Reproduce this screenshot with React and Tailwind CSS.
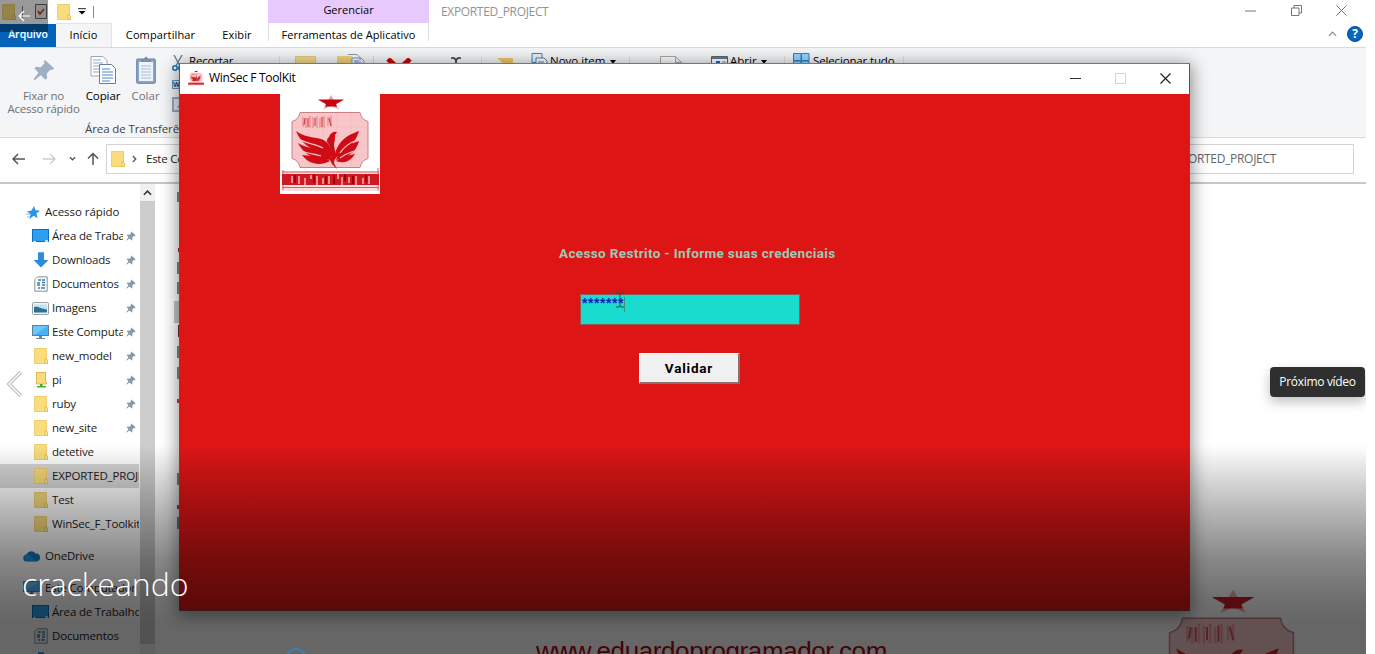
import React from "react";

const Folder = ({ className = "" }) => (
  <svg viewBox="0 0 14 16" className={"shrink-0 " + className}>
    <path d="M.5.5h12v11l1 1v3H.5z" fill="#f9dc7c" stroke="#e9c65c" strokeWidth=".8" />
    <path d="M11 10.5l2.5 1.5v3.5H11z" fill="#fbe79a" stroke="#e0b94e" strokeWidth=".8" />
  </svg>
);

const PinIcon = ({ className = "" }) => (
  <svg viewBox="0 0 24 24" className={"shrink-0 " + className} fill="currentColor">
    <path d="M13 1l10 9-2 2-2-.3-4 4 .5 5-2 2-5-5L2 23l-1.500-1L6 15l-4.500-5 2-1.500 5 .5 4-4.500-.5-2z" />
  </svg>
);

const Monitor = ({ stand }) => (
  <svg viewBox="0 0 17 16" className="h-4 w-[17px] shrink-0">
    <rect x=".5" y="1.500" width="16" height={stand ? 10 : 12} fill="#2d9ff0" stroke={stand ? "#5c7f96" : "#0d6dc4"} />
    {stand ? (
      <>
        <path d="M1 2h15v9H1z" fill="#46b1f5" />
        <path d="M1 2h15L3 10.500H1z" fill="#6cc6f8" />
        <path d="M7 12h3v2H7zM4 14h9v1H4z" fill="#6e8594" />
      </>
    ) : (
      <path d="M1 13h3v1H1zM13 12h3v2h-3z" fill="#bfe1fa" />
    )}
  </svg>
);

const DocIcon = () => (
  <svg viewBox="0 0 14 16" className="h-4 w-[14px] shrink-0">
    <path d="M.8 3.500L3.500.8h9.700v14.400H.8z" fill="#fafafa" stroke="#8b9299" />
    <path d="M4 4h3M8 4h3M3 7h3M8 6.500h3M3 9h3M8 9h3M4 12h2M7 12h4" stroke="#3a7fae" strokeWidth="1.400" />
  </svg>
);

const DownIcon = () => (
  <svg viewBox="0 0 16 16" className="h-4 w-4 shrink-0">
    <path d="M5 .5h6V8h4.500L8 15.500.5 8H5z" fill="#2d8ade" />
    <path d="M5 .5h6" stroke="#6aa9dc" />
  </svg>
);

const ImageIcon = () => (
  <svg viewBox="0 0 17 13" className="h-[13px] w-[17px] shrink-0">
    <rect x=".5" y=".5" width="16" height="12" rx="1" fill="#f4f4f4" stroke="#9b9fa3" />
    <rect x="2" y="2.500" width="13" height="8" fill="#bfe2f7" />
    <path d="M2 5c4-1 7 2 13 2.500v3H2z" fill="#2f6f8f" />
  </svg>
);

const Cloud = () => (
  <svg viewBox="0 0 17 12" className="h-3 w-[17px] shrink-0">
    <path d="M4 11.500a3.500 3.500 0 0 1-.4-7A5 5 0 0 1 12.500 3.500 4 4 0 0 1 13.500 11.500z" fill="#1177c8" />
    <path d="M3.600 4.500c3 0 6 3 10 6.800H4a3.500 3.500 0 0 1-.4-6.800" fill="#1f93e0" />
  </svg>
);

const NetFolder = () => (
  <svg viewBox="0 0 14 16" className="h-4 w-[14px] shrink-0">
    <path d="M2.500.5h9v9l1 .5v2h-10z" fill="#f9dc7c" stroke="#dfb84c" />
    <path d="M6 12h2.500v2H12v1.500H3V14h3z" fill="#3faf3a" />
  </svg>
);

const StarIcon = () => (
  <svg viewBox="0 0 14 13" className="h-[13px] w-[14px] shrink-0">
    <path d="M8 0l1.500 4.200 4.500.3-3.500 3 1 4.700-3.800-2.400L3.500 13l1-5L1 5.500l4.500-1z" fill="#2c93e3" />
    <path d="M0 8h4M1 11h3" stroke="#7fbdec" />
  </svg>
);

const Emblem = ({ className = "", flat = false }) => (
  <svg viewBox="0 0 100 100" className={className}>
    {!flat && <rect width="100" height="100" fill="#fff" />}
    <path d="M51 1l3 5h10l-8 4.500 3 5-8-3.500-8 3.500 3-5-8-4.500h10z" fill="#eba8a8" />
    <path d="M38 5.500h26L56 10l1 2.500H45L46 10z" fill="#c5040c" />
    <path d="M20 18.500h60q1 7 8 9v37q-7 2-8 9H20q-1-7-8-9v-37q7-2 8-9z" fill="#f8c6c8" stroke="#bd777a" strokeWidth=".9" />
    <path d="M15 33h70M15 42h70M15 51h70M15 60h70M29 20v53M43 20v53M57 20v53M71 20v53" stroke="#f3b5b8" strokeWidth=".5" />
    <path d="M23 23v10M26 24v10M30 22v12M33 23v11M37 22v12M40 24v10M44 22v12M48 23v9M51 22v10" stroke="#ea9599" strokeWidth="1.600" />
    <path d="M25 24l-1 7M28 24v9M35 24v8M42 23v10M49 24l2 8" stroke="#cc3a42" strokeWidth="1.100" fill="none" />
    <g fill="#cf0c15">
      <path d="M16 37c8 6 17 6 25 8 6 2 9 6 10 12v9c-4-4-6-6-11-8-9-3-19-8-24-21z" />
      <path d="M18 49c8 5 17 5 24 8 5 2 7 5 8 9-4-1-8-1-12-2-9-1-16-7-20-15z" />
      <path d="M22 61c7 1 14 1 20 2 4 1 6 3 8 4-6 3-11 4-17 2-4-1-8-4-11-8z" />
      <path d="M79 37c-8 3-13 5-18 11-4 5-6 9-7 18 4-5 9-7 13-11 6-5 9-9 12-18z" />
      <path d="M79 47c-6 2-11 4-15 8-4 3-7 7-8 11 5-1 9-2 13-5 5-3 8-7 10-14z" />
      <path d="M75 60c-7 1-13 3-19 7 7 3 14 1 19-7z" />
      <path d="M57 38c-3-1-7 1-8 5-2 1-2 3-2 5 3 3 4 9 4 14l4 4c2-6-1-11-1-16 1-3 1-6 1-9z" />
      <path d="M48 62l7 1-1 6 3 6-5-5z" />
    </g>
    <path d="M19 45c8 5 17 5 24 9M22 57c7 3 13 3 19 5M77 46c-8 3-13 7-17 13M74 57c-6 2-10 4-14 7" stroke="#f8c6c8" strokeWidth="1.200" fill="none" />
    <rect x="1.500" y="77" width="98" height="20" fill="#fbdddd" />
    <path d="M2 78h97M2 93.500h97M3 76v20M98 74v22" stroke="#d66068" strokeWidth="1" />
    <rect x="2" y="80" width="97" height="11" fill="#ce1822" />
    <path d="M12 82v7M19 82v8M25 84v7M31 81v4M37 82v9M43 84v6M49 82v8M58 80v5M62 83v8M69 83v6M76 82v9M83 84v6M89 82v8" stroke="#f0989d" strokeWidth="1.800" />
    <path d="M15 81v8M34 80v9M46 82v8M54 81v9M65 80v7M73 82v8M86 81v7" stroke="#a3000a" strokeWidth="2" />
  </svg>
);

const pins = [
  [<Monitor />, "Área de Traba", true],
  [<DownIcon />, "Downloads", true],
  [<DocIcon />, "Documentos", true],
  [<ImageIcon />, "Imagens", true],
  [<Monitor stand />, "Este Computador", true],
  [<Folder className="h-4 w-[14px]" />, "new_model", true],
  [<NetFolder />, "pi", true],
  [<Folder className="h-4 w-[14px]" />, "ruby", true],
  [<Folder className="h-4 w-[14px]" />, "new_site", true],
  [<Folder className="h-4 w-[14px]" />, "detetive", false],
  [<Folder className="h-4 w-[14px]" />, "EXPORTED_PROJECT", false, true],
  [<Folder className="h-4 w-[14px]" />, "Test", false],
  [<Folder className="h-4 w-[14px]" />, "WinSec_F_Toolkit", false],
];

function SideRow({ icon, label, pinned, selected }) {
  return (
    <div className={"flex h-6 w-[139px] shrink-0 items-center pl-8 " + (selected ? "bg-[#d6d6d6]" : "")}>
      <span className="flex w-[17px] shrink-0 justify-center">{icon}</span>
      <span className={"ml-[3px] shrink-0 overflow-hidden whitespace-nowrap " + (pinned ? "w-[71px]" : "w-[87px]")}>{label}</span>
      {pinned && <PinIcon className="ml-[3px] h-[10px] w-[10px] text-[#8b98a4]" />}
    </div>
  );
}

function Sidebar() {
  return (
    <div className="flex h-[470px] w-[155px] shrink-0 tracking-[-0.18px]">
      <div className="flex w-[140px] flex-col overflow-hidden pt-4">
        <div className="flex h-6 shrink-0 items-center pl-[26px]">
          <StarIcon />
          <span className="ml-[5px] whitespace-nowrap tracking-[-0.05px]">Acesso rápido</span>
        </div>
        {pins.map(([icon, label, pinned, selected]) => (
          <SideRow key={label} icon={icon} label={label} pinned={pinned} selected={selected} />
        ))}
        <div className="mt-2 flex h-6 shrink-0 items-center pl-[23px]">
          <Cloud />
          <span className="ml-[5px]">OneDrive</span>
        </div>
        <div className="mt-2 flex h-6 shrink-0 items-center pl-[23px]">
          <Monitor stand />
          <span className="ml-[5px] whitespace-nowrap">Este Computador</span>
        </div>
        <SideRow icon={<Monitor />} label="Área de Trabalho" />
        <SideRow icon={<DocIcon />} label="Documentos" />
        <SideRow icon={<DownIcon />} label="" />
      </div>
      <div className="flex w-[15px] flex-col bg-[#f0f0f0]">
        <div className="flex h-[17px] items-center justify-center">
          <svg viewBox="0 0 10 6" className="h-[6px] w-[9px]"><path d="M1 5l4-4 4 4" fill="none" stroke="#333" strokeWidth="1.700" /></svg>
        </div>
        <div className="h-[443px] bg-[#cdcdcd]" />
      </div>
    </div>
  );
}

const Caret = () => <span className="ml-[5px] inline-block border-x-[3px] border-t-[4px] border-x-transparent border-t-black" />;

function Ribbon() {
  return (
    <div className="flex h-[91px] shrink-0 border-y border-[#d9dadb] bg-[#f4f5f7] pt-2">
      <div className="flex w-[280px] flex-col border-r border-[#dfe0e2]">
        <div className="flex h-[66px]">
          <div className="flex w-[87px] flex-col items-center text-[#6f7276]">
            <PinIcon className="mt-[3px] h-[22px] w-[22px] text-[#9fb0c4]" />
            <div className="mt-[8px] whitespace-nowrap text-center leading-[13px] tracking-[-0.22px]">Fixar no<br />Acesso rápido</div>
          </div>
          <div className="flex w-8 flex-col items-center">
            <svg viewBox="0 0 26 28" className="h-7 w-[26px] shrink-0">
              <path d="M1 .5h12l4 4V20H1z" fill="#fff" stroke="#9aa7b7" />
              <path d="M3 4h8M3 7h10M3 10h8M3 13h6M3 16h6" stroke="#8da8cb" />
              <path d="M9.500 8.500h12l4 4v15h-16z" fill="#fff" stroke="#667c99" />
              <path d="M12 13h8M12 16h11M12 19h11M12 22h11M12 25h8" stroke="#4d83c6" />
            </svg>
            <span className="mt-[3px] tracking-[-0.1px] text-black">Copiar</span>
          </div>
          <div className="flex w-[53px] flex-col items-center text-[#6f7276]">
            <svg viewBox="0 0 20 28" className="h-7 w-5 shrink-0">
              <rect x=".7" y="3" width="18.600" height="24.300" rx="1" fill="#8da5c9" stroke="#647fa8" />
              <path d="M3 6h14v19H3z" fill="#eef3fa" />
              <path d="M5 10h10M5 13h10M5 16h10M5 19h10M5 22h10" stroke="#a9bbd6" />
              <path d="M5 6V3h3q2-5 4 0h3v3z" fill="#7b8ea9" />
            </svg>
            <span className="mt-[3px]">Colar</span>
          </div>
          <div className="flex flex-col gap-2 text-black">
            <div className="-mt-[2px] flex h-[18px] items-center gap-[5px]">
              <svg viewBox="0 0 12 17" className="h-[17px] w-3 text-[#657a90]" fill="none" stroke="currentColor">
                <path d="M2 0l6 11M10 0L4 11" strokeWidth="1.300" />
                <circle cx="3" cy="13" r="2.200" stroke="#0d78c8" strokeWidth="1.500" />
                <circle cx="9" cy="13" r="2.200" stroke="#0d78c8" strokeWidth="1.500" />
              </svg>
              <span className="-mt-[5px] tracking-[-0.2px]">Recortar</span>
            </div>
            <div className="h-[9px] w-4 border border-[#6b93b5] bg-[#d7eaf7] text-[7px] font-bold leading-[7px] text-[#15507f]">W</div>
            <div className="flex h-[15px] w-4 shrink-0 items-center justify-center border-2 border-[#98a8bb] bg-[#e5eaf1] text-[9px] text-[#42576e]">↗</div>
          </div>
        </div>
        <span className="whitespace-nowrap pl-[85px] leading-[13px] tracking-[-0.1px] text-[#444]">Área de Transferência</span>
      </div>
      <div className="flex w-[202px] items-start border-r border-[#dfe0e2] pl-[15px]">
        <span className="h-4 w-[21px] border border-[#e4c972] bg-[#f2d98a]" />
        <span className="ml-[21px] h-4 w-4 bg-[#f0d27b]" />
        <svg viewBox="0 0 18 16" className="-ml-[6px] -mt-[2px] h-4 w-[18px]"><path d="M1 .5h9l3 3v3M5 4h9l3 3v9H5z" fill="#f7f9fb" stroke="#8697aa" /><path d="M7 7h5M7 9h8" stroke="#4d83c6" /></svg>
        <span className="ml-2 h-8 w-px bg-[#d7d7d7]" />
        <svg viewBox="0 0 26 22" className="ml-3 mt-[2px] h-[22px] w-[26px]"><path d="M2 1l22 20M24 1L2 21" stroke="#c5040b" strokeWidth="5" /></svg>
        <svg viewBox="0 0 12 16" className="ml-[38px] mt-[1px] h-4 w-3"><path d="M1 1h3l2 2 2-2h3M6 3v12" fill="none" stroke="#333" strokeWidth="1.700" /></svg>
      </div>
      <div className="flex w-[148px] items-start border-r border-[#dfe0e2] pl-[15px] text-black">
        <svg viewBox="0 0 16 14" className="mt-[2px] h-[14px] w-4"><path d="M0 0h16v14z" fill="#ecc869" /></svg>
        <svg viewBox="0 0 17 16" className="-mt-[3px] ml-[18px] h-4 w-[17px]"><path d="M1 .5h10v9H1z" fill="#e4f1fa" stroke="#3988b5" /><path d="M5 5h8l3 3v8H5z" fill="#fff" stroke="#667c99" /><path d="M7 9h6" stroke="#4d83c6" /></svg>
        <span className="-mt-[2px] ml-[2px] whitespace-nowrap leading-[14px]">Novo item</span><span className="-mt-[5px]"><Caret /></span>
      </div>
      <div className="flex w-[155px] items-start border-r border-[#dfe0e2] pl-[30px] text-black">
        <svg viewBox="0 0 22 20" className="h-5 w-[22px]"><path d="M.5 19V.5h15l6 6V19M15.500.5v6h6" fill="#fcfcfc" stroke="#a8a8a8" /></svg>
        <svg viewBox="0 0 17 14" className="ml-[29px] h-[14px] w-[17px]"><path d="M.5.500h16v13H.5z" fill="#fff" stroke="#556674" /><path d="M1 2h15" stroke="#667989" strokeWidth="2" /><path d="M5 5h4v4H5z" fill="#1a6bd0" /><path d="M11 6h4" stroke="#888" /></svg>
        <span className="-mt-[2px] ml-[2px] leading-[14px]">Abrir</span><span className="-mt-[5px] -ml-px"><Caret /></span>
      </div>
      <div className="flex w-[119px] items-start border-r border-[#dfe0e2] pl-2 text-black">
        <svg viewBox="0 0 17 16" className="-mt-[3px] h-4 w-[17px]"><path d="M.5.500h7.500v7H.5zM8.500.500H16v7H8.500zM.5 8h7.500v7H.5zM8.500 8H16v7H8.500z" fill="#9ed2fa" stroke="#2784cc" /></svg>
        <span className="-mt-[2px] ml-[3px] whitespace-nowrap leading-[14px] tracking-[-0.15px]">Selecionar tudo</span>
      </div>
    </div>
  );
}

function Explorer() {
  return (
    <div className="flex h-full w-full flex-col bg-white">
      <div className="flex h-[47px] shrink-0 text-black">
        <div className="flex w-[268px] shrink-0 flex-col">
          <div className="flex h-[23px] items-center">
            <Folder className="ml-[2px] h-4 w-[14px]" />
            <span className="ml-[6px] h-3 w-px bg-[#777]" />
            <svg viewBox="0 0 12 15" className="ml-3 h-[15px] w-3"><path d="M.5.500h11v14H.5z" fill="#eee" stroke="#666" /><path d="M3 7l2 3 4-5" fill="none" stroke="#c54a16" strokeWidth="1.800" /></svg>
            <Folder className="ml-[10px] h-4 w-[14px]" />
            <svg viewBox="0 0 8 7" className="ml-[7px] h-[7px] w-2"><path d="M0 .7h8" stroke="#222" /><path d="M.500 3h7L4 6.500z" /></svg>
            <span className="ml-[7px] h-3 w-px bg-[#888]" />
          </div>
          <div className="flex h-6 items-center text-center text-[11px] tracking-[0.12px]">
            <span className="flex h-[23px] w-14 items-center justify-center bg-[#0463b8] text-[10.5px] font-semibold tracking-normal text-white">Arquivo</span>
            <span className="flex h-6 w-14 items-center justify-center border-r border-t border-[#e2e3e5] bg-[#f4f5f7]">Início</span>
            <span className="w-[97px]">Compartilhar</span>
            <span className="w-[56px]">Exibir</span>
          </div>
        </div>
        <div className="flex w-[161px] shrink-0 flex-col text-center text-[11px]">
          <span className="h-[23px] bg-[#e8c9fd] leading-[20px]">Gerenciar</span>
          <span className="h-[18px] whitespace-nowrap border-x border-[#ddd] leading-[24px] tracking-[0.02px]">Ferramentas de Aplicativo</span>
        </div>
        <span className="ml-[12px] text-[12px] leading-[23px] tracking-[-0.34px] text-[#929292]">EXPORTED_PROJECT</span>
        <div className="ml-auto flex w-[124px] flex-col text-[#777]">
          <div className="flex h-[20px] items-center gap-[34.500px] pl-[3px]">
            <svg viewBox="0 0 11 11" className="h-[11px] w-[11px]" stroke="currentColor"><path d="M0 6h11" /></svg>
            <svg viewBox="0 0 11 11" className="h-[11px] w-[11px]" fill="none" stroke="currentColor"><path d="M.5 3h7.500v7.500H.5zM3 3V.5h7.500V8H8" /></svg>
            <svg viewBox="0 0 11 11" className="h-[11px] w-[11px]" stroke="currentColor"><path d="M.5.500l10 10M10.500.500l-10 10" /></svg>
          </div>
          <div className="mt-[2px] flex h-6 items-center pl-[86px]">
            <svg viewBox="0 0 10 6" className="h-[6px] w-[9px]"><path d="M1 5l4-4 4 4" fill="none" stroke="#888" strokeWidth="1.300" /></svg>
            <span className="ml-[10px] flex h-4 w-4 items-center justify-center rounded-full border border-[#024a91] bg-[#0865c2] text-[12px] font-bold leading-none text-white">?</span>
          </div>
        </div>
      </div>
      <Ribbon />
      <div className="flex h-[46px] shrink-0 items-center border-b-2 border-[#c7c7c7] pb-[3px] pl-3 text-[#222]">
        <svg viewBox="0 0 14 12" className="h-3 w-[14px]" fill="none" stroke="#555" strokeWidth="1.500"><path d="M13 6H1.500M6 1L1 6l5 5" /></svg>
        <svg viewBox="0 0 14 12" className="ml-4 h-3 w-[14px]" fill="none" stroke="#ccc" strokeWidth="1.300"><path d="M1 6h11.500M8 1l5 5-5 5" /></svg>
        <svg viewBox="0 0 8 5" className="ml-[13px] h-[5px] w-[7px]" fill="none" stroke="#555" strokeWidth="1.500"><path d="M1 1l3 3 3-3" /></svg>
        <svg viewBox="0 0 12 14" className="ml-[11px] h-[14px] w-3" fill="none" stroke="#555" strokeWidth="1.500"><path d="M6 13V1.500M1 6.500l5-5 5 5" /></svg>
        <div className="ml-[7px] flex h-[30px] w-[900px] items-center border border-[#d4d4d4] pl-1">
          <Folder className="h-4 w-[14px]" />
          <svg viewBox="0 0 6 9" className="ml-[7px] mr-[9px] h-2 w-[5px]" fill="none" stroke="#555" strokeWidth="1.600"><path d="M1 1l3.500 3.500L1 8" /></svg>
          <span className="tracking-[-0.25px]">Este Computador</span>
        </div>
        <div className="ml-[14px] flex h-[30px] w-[334px] items-center border border-[#d4d4d4] pl-[147px] text-[12px] tracking-[-0.3px] text-[#666]">EXPORTED_PROJECT</div>
      </div>
      <div className="flex text-[#1b1b1b]">
        <Sidebar />
        <div className="flex w-[25px] flex-col items-end pt-[8px]">
          <span className="h-[10px] w-[3px] bg-[#7f8c8e]" />
          <span className="mt-[46px] h-1 w-[2px] bg-[#b52b2b]" />
          <span className="mt-[10px] h-3 w-[3px] bg-[#7f8c8e]" />
          <span className="mt-2 h-3 w-[3px] bg-[#7f8c8e]" />
          <span className="mt-[7px] h-[22px] w-[6px] bg-[#c7c7c7]" />
          <span className="mt-[2px] h-3 w-[2px] bg-[#702b2b]" />
          <span className="mt-[9px] h-3 w-[3px] bg-[#7f8c8e]" />
          <span className="mt-[9px] h-3 w-[3px] bg-[#7f8c8e]" />
          <span className="mt-5 h-1 w-[3px] bg-[#c93b3b]" />
          <span className="mt-[70px] h-3 w-[3px] bg-[#7f8c8e]" />
          <span className="mt-5 h-1 w-[3px] bg-[#c93b3b]" />
          <span className="mt-2 h-3 w-[3px] bg-[#7f8c8e]" />
        </div>
      </div>
    </div>
  );
}

function LoginWindow() {
  return (
    <div className="absolute left-[179px] top-[63px] flex h-[548px] w-[1011px] flex-col border border-[#7d4444] border-t-[#777] bg-[#dd1515] shadow-[0_3px_16px_2px_rgba(0,0,0,0.42)]">
      <div className="flex h-[30px] shrink-0 items-center bg-white pb-[2px] pl-2 text-black">
        <Emblem className="h-4 w-4" />
        <span className="ml-[5px] text-[12px] tracking-[-0.33px]">WinSec F ToolKit</span>
        <div className="ml-auto mr-[18px] flex items-center gap-[34px]">
          <svg viewBox="0 0 11 11" className="h-[11px] w-[11px]" stroke="#333"><path d="M0 5.500h11" /></svg>
          <svg viewBox="0 0 11 11" className="h-[11px] w-[11px]"><path d="M.5.500h10v10H.5z" fill="none" stroke="#d2d2d2" /></svg>
          <svg viewBox="0 0 11 11" className="h-[11px] w-[11px]" stroke="#222" strokeWidth="1.200"><path d="M.5.500l10 10M10.500.500l-10 10" /></svg>
        </div>
      </div>
      <Emblem className="ml-[100px] h-[100px] w-[100px] shrink-0" />
      <div className="ml-[379px] mt-[51px] h-4 w-[290px] whitespace-nowrap font-[Roboto,sans-serif] text-[13.5px] font-bold leading-4 tracking-[0.360px] text-[#9fc9b8]">Acesso Restrito - Informe suas credenciais</div>
      <div className="ml-[400px] mt-[33px] flex h-[31px] w-[220px] shrink-0 items-start border border-[#8e5b59] bg-[#19dccf] pl-[1px] font-['Liberation_Sans'] text-[14px] leading-5 tracking-[0.550px] text-[#1224b8]">
        <span className="-mt-[2px] font-bold">*******</span>
        <svg viewBox="0 0 8 16" className="-ml-[8px] -mt-[3px] h-4 w-2"><path d="M0 1h3l1 1 1-1h3M4 2v12M0 15h3l1-1 1 1h3" fill="none" stroke="#214c50" /></svg>
        <span className="mt-[2px] h-[15px] w-px bg-[#3e8f88]" />
      </div>
      <div className="ml-[459px] mt-[28px] flex h-[31px] w-[101px] shrink-0 items-center justify-center border border-b-2 border-r-2 border-white border-b-[#8d6e6e] border-r-[#8d6e6e] bg-[#f0f0f0] font-[Roboto,sans-serif] text-[13.5px] font-bold tracking-[0.800px] text-black">Validar</div>
    </div>
  );
}

export default function App() {
  return (
    <div className="h-[654px] w-[1375px] overflow-hidden bg-white">
      <main className="relative h-[654px] w-[1366px] overflow-hidden bg-white font-['Open_Sans',sans-serif] text-[11.5px]">
        <Explorer />
        <div className="absolute left-[536px] top-[635px] whitespace-nowrap font-['Liberation_Sans'] text-[26px] leading-[32px] tracking-[-0.400px] text-[#a80a12]">www.eduardoprogramador.com</div>
        <Emblem flat className="absolute left-[1150px] top-[588px] h-[163px] w-[163px] opacity-90" />
        <LoginWindow />
        <div className="absolute inset-x-0 bottom-0 h-[209px] bg-[linear-gradient(to_bottom,rgba(0,0,0,0)_0px,rgba(0,0,0,0.14)_31px,rgba(0,0,0,0.32)_75px,rgba(0,0,0,0.47)_115px,rgba(0,0,0,0.57)_155px,rgba(0,0,0,0.6)_177px)]" />
        <div className="absolute left-0 top-0 flex h-8 w-12 items-center justify-center bg-black/40">
          <svg viewBox="0 0 12 12" className="-mt-[1px] h-3 w-3" fill="none" stroke="#fff" strokeWidth="1.200"><path d="M12 6H1M6 1L1 6l5 5" /></svg>
        </div>
        <svg viewBox="0 0 16 26" className="absolute left-[7px] top-[371px] h-[26px] w-4" fill="none"><path d="M14 1L2 13l12 12" stroke="#b9b9b9" strokeWidth="3.500" /><path d="M14 1L2 13l12 12" stroke="#fff" strokeWidth="1.400" /></svg>
        <h1 className="absolute left-[22px] top-[562px] font-['Open_Sans',sans-serif] text-[32px] leading-[44px] text-white [font-weight:340]">crackeando</h1>
        <div className="absolute left-[1270px] top-[367px] flex h-[30px] w-[95px] items-center justify-center rounded-[4px] bg-[#2f2f2f] text-[12px] tracking-[-0.32px] text-white shadow-[0_5px_12px_rgba(0,0,0,0.25)]">Próximo vídeo</div>
        <span className="absolute left-[286px] top-[648px] h-5 w-5 rounded-full border-2 border-[#3f7fb5]" />
      </main>
    </div>
  );
}
